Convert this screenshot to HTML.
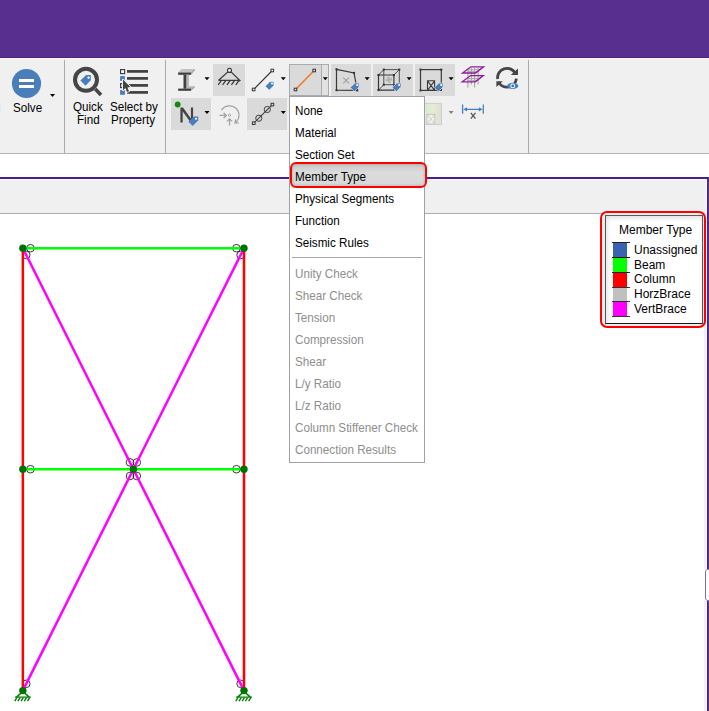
<!DOCTYPE html>
<html><head><meta charset="utf-8">
<style>
*{margin:0;padding:0;box-sizing:border-box}
html,body{width:709px;height:711px;overflow:hidden;background:#f0f0f0;font-family:"Liberation Sans",sans-serif;position:relative}
.a{position:absolute}
#hdr{left:0;top:0;width:709px;height:57px;background:#582e8f}
#hdrl{left:0;top:57px;width:709px;height:1px;background:#4e2387}
#hdrw{left:0;top:58px;width:709px;height:1px;background:#f6f6f6}
.sep{width:1px;background:#a9a9ae;top:60px;height:93px}
#tbb{left:0;top:153px;width:709px;height:1px;background:#b4b4bb}
#wstrip{left:0;top:154px;width:709px;height:23px;background:#fff}
#pl{left:0;top:177px;width:709px;height:2px;background:#48218a}
#plw{left:0;top:179px;width:707px;height:1px;background:#f8f8f8}
#gstrip{left:0;top:180px;width:707px;height:33px;background:#f0f0f0}
#gl{left:0;top:213px;width:701px;height:1px;background:#acacb2}
#canvas{left:0;top:214px;width:704px;height:497px;background:#fff}
#cg{left:704px;top:214px;width:2px;height:497px;background:#f0f0f0}
#cw{left:706px;top:180px;width:1px;height:531px;background:#fafafa}
#pr{left:707px;top:177px;width:1px;height:534px;background:#4a2388}
#pr2{left:708px;top:177px;width:1px;height:534px;background:#582e8f}
.t{font-size:12.4px;color:#000;white-space:nowrap;line-height:13px;transform:scaleX(0.94);transform-origin:0 0}
.btn{background:#dadada}
.arr{width:0;height:0;border-left:2.5px solid transparent;border-right:2.5px solid transparent;border-top:3px solid #000}
#menu{left:289px;top:96px;width:136px;height:367px;background:#fff;border:1px solid #a0a0a8}
.mi{left:295px;line-height:13px;font-size:12.4px;color:#000;white-space:nowrap;transform:scaleX(0.94);transform-origin:0 0}
.dis{color:#8e8e8e}
#mhl{left:289.5px;top:162.2px;width:137.3px;height:25.4px;border:2.5px solid #ff0000;border-radius:6px;background:linear-gradient(#c9c9c9,#dcdcdc 40%,#d8d8d8);box-shadow:inset 0 0 3px rgba(0,0,0,.25)}
.lg{font-size:12px;line-height:13px;color:#000;white-space:nowrap}
</style></head><body>
<div class="a" id="hdr"></div>
<div class="a" id="hdrl"></div>
<div class="a" id="hdrw"></div>
<div class="a sep" style="left:64px"></div>
<div class="a sep" style="left:165px"></div>
<div class="a sep" style="left:528px"></div>
<div class="a" id="tbb"></div>
<div class="a" id="wstrip"></div>
<div class="a" id="pl"></div>
<div class="a" id="plw"></div>
<div class="a" id="gstrip"></div>
<div class="a" id="gl"></div>
<div class="a" id="canvas"></div>
<div class="a" id="cg"></div>
<div class="a" id="cw"></div>
<div class="a" id="pr"></div>
<div class="a" id="pr2"></div>

<svg class="a" style="left:0;top:214px" width="704" height="497" viewBox="0 214 704 497">
<circle cx="30.45" cy="248.20" r="3.8" fill="none" stroke="#222" stroke-width="0.9"/>
<circle cx="236.40" cy="248.20" r="3.8" fill="none" stroke="#222" stroke-width="0.9"/>
<circle cx="30.45" cy="469.20" r="3.8" fill="none" stroke="#222" stroke-width="0.9"/>
<circle cx="236.40" cy="469.20" r="3.8" fill="none" stroke="#222" stroke-width="0.9"/>
<circle cx="26.25" cy="255.00" r="3.8" fill="none" stroke="#222" stroke-width="0.9"/>
<circle cx="130.00" cy="462.40" r="3.8" fill="none" stroke="#222" stroke-width="0.9"/>
<circle cx="240.60" cy="255.00" r="3.8" fill="none" stroke="#222" stroke-width="0.9"/>
<circle cx="136.80" cy="462.40" r="3.8" fill="none" stroke="#222" stroke-width="0.9"/>
<circle cx="130.00" cy="476.00" r="3.8" fill="none" stroke="#222" stroke-width="0.9"/>
<circle cx="26.25" cy="683.80" r="3.8" fill="none" stroke="#222" stroke-width="0.9"/>
<circle cx="136.80" cy="476.00" r="3.8" fill="none" stroke="#222" stroke-width="0.9"/>
<circle cx="240.60" cy="683.80" r="3.8" fill="none" stroke="#222" stroke-width="0.9"/>
<line x1="22.85" y1="248.2" x2="22.85" y2="690.6" stroke="#ff0000" stroke-width="2.5"/>
<line x1="244.0" y1="248.2" x2="244.0" y2="690.6" stroke="#ff0000" stroke-width="2.5"/>
<line x1="22.85" y1="248.2" x2="244.0" y2="248.2" stroke="#00ff00" stroke-width="2.5"/>
<line x1="22.85" y1="469.2" x2="244.0" y2="469.2" stroke="#00ff00" stroke-width="2.5"/>
<line x1="22.85" y1="248.2" x2="133.4" y2="469.2" stroke="#ff00ff" stroke-width="2.5"/>
<line x1="244.0" y1="248.2" x2="133.4" y2="469.2" stroke="#ff00ff" stroke-width="2.5"/>
<line x1="133.4" y1="469.2" x2="22.85" y2="690.6" stroke="#ff00ff" stroke-width="2.5"/>
<line x1="133.4" y1="469.2" x2="244.0" y2="690.6" stroke="#ff00ff" stroke-width="2.5"/>
<circle cx="22.85" cy="248.2" r="3.7" fill="#007000"/>
<circle cx="244.0" cy="248.2" r="3.7" fill="#007000"/>
<circle cx="22.85" cy="469.2" r="3.7" fill="#007000"/>
<circle cx="133.4" cy="469.2" r="3.7" fill="#007000"/>
<circle cx="244.0" cy="469.2" r="3.7" fill="#007000"/>
<circle cx="22.85" cy="690.6" r="3.7" fill="#007000"/>
<circle cx="244.0" cy="690.6" r="3.7" fill="#007000"/>
<path d="M22.85 691.6 L16.35 697.1 M22.85 691.6 L29.35 697.1 M14.850000000000001 697.1 L30.85 697.1" stroke="#008000" stroke-width="1.4" fill="none"/>
<path d="M16.9 697.6 L14.7 701.1 M20.1 697.6 L17.9 701.1 M23.2 697.6 L21.1 701.1 M26.5 697.6 L24.3 701.1 M29.7 697.6 L27.5 701.1 " stroke="#008000" stroke-width="1.4" fill="none"/>
<path d="M244.0 691.6 L237.5 697.1 M244.0 691.6 L250.5 697.1 M236.0 697.1 L252.0 697.1" stroke="#008000" stroke-width="1.4" fill="none"/>
<path d="M238.0 697.6 L235.8 701.1 M241.2 697.6 L239.0 701.1 M244.4 697.6 L242.2 701.1 M247.6 697.6 L245.4 701.1 M250.8 697.6 L248.6 701.1 " stroke="#008000" stroke-width="1.4" fill="none"/>
</svg>
<!-- legend -->
<div class="a" style="left:600px;top:211.3px;width:105.9px;height:116.9px;border:2.5px solid #ff0000;border-radius:7px;background:#ececec"></div>
<div class="a" style="left:605.4px;top:214.9px;width:97.3px;height:108.8px;border-style:solid;border-width:1.7px 1.9px 1.3px 1.5px;border-color:#5a5a5a #5a5a5a #1a1a1a #555;background:#fff;box-shadow:inset 1px 2px 5px rgba(0,0,0,.13)"></div>
<div class="a lg" style="left:619px;top:223.5px">Member Type</div>
<div class="a" style="left:613px;top:242px;width:14px;height:15px;background:#3a62b2"></div>
<div class="a" style="left:613px;top:257px;width:14px;height:15px;background:#00ff00"></div>
<div class="a" style="left:613px;top:272px;width:14px;height:15px;background:#ff0000"></div>
<div class="a" style="left:613px;top:287px;width:14px;height:14px;background:#c0c0c0"></div>
<div class="a" style="left:613px;top:301px;width:14px;height:15px;background:#ff00ff"></div>
<div class="a" style="left:612px;top:242px;width:18px;height:1px;background:#222"></div>
<div class="a" style="left:612px;top:257px;width:18px;height:1px;background:#111"></div>
<div class="a" style="left:612px;top:272px;width:18px;height:1px;background:#222"></div>
<div class="a" style="left:612px;top:287px;width:18px;height:1px;background:#333"></div>
<div class="a" style="left:612px;top:301px;width:18px;height:1px;background:#333"></div>
<div class="a" style="left:612px;top:316px;width:18px;height:1px;background:#333"></div>
<div class="a lg" style="left:634px;top:243.5px">Unassigned</div>
<div class="a lg" style="left:634px;top:258.5px">Beam</div>
<div class="a lg" style="left:634px;top:273.2px">Column</div>
<div class="a lg" style="left:634px;top:287.8px">HorzBrace</div>
<div class="a lg" style="left:634px;top:302.6px">VertBrace</div>

<svg class="a" style="left:700px;top:560px" width="9" height="50" viewBox="700 560 9 50"><rect x="704" y="569.5" width="5" height="31" fill="#fff"/><path d="M709 569.3 L707.2 569.3 L705.5 571.2 L705.5 598.8 L707.2 600.7 L709 600.7" fill="none" stroke="#8468bb" stroke-width="1"/></svg>
<div class="a" style="left:0;top:105px;width:1px;height:8px;background:#d8f0f0"></div>
<!-- Solve -->
<svg class="a" style="left:0;top:58px" width="709" height="95" viewBox="0 58 709 95">
<circle cx="26.5" cy="83.5" r="14.6" fill="#4a7ebb"/><rect x="19" y="79" width="15" height="3" fill="#fff"/><rect x="19" y="85" width="15" height="3" fill="#fff"/>
<path d="M50 94 L55 94 L52.5 97 Z" fill="#000"/>
<circle cx="86" cy="79.8" r="11" fill="none" stroke="#454545" stroke-width="4"/><path d="M95.3 89.1 L101 95" stroke="#454545" stroke-width="3.6"/>
<path d="M80.4 80.6 L85.5 85.7 L90.8 80.3 L90.8 75.1 L86.2 75.1 Z" fill="#4a7ebb"/><circle cx="88.6" cy="77.6" r="1.2" fill="#fff"/>
<rect x="127" y="70.05000000000001" width="21" height="2.7" fill="#404040"/>
<rect x="127" y="77.05000000000001" width="21" height="2.7" fill="#404040"/>
<rect x="127" y="84.05000000000001" width="21" height="2.7" fill="#404040"/>
<rect x="127" y="91.05000000000001" width="21" height="2.7" fill="#404040"/>
<rect x="120.6" y="69.6" width="4" height="4" fill="#fff" stroke="#404040" stroke-width="1.2"/>
<rect x="120.1" y="76.1" width="4.8" height="4.8" fill="#4a7ebb"/>
<rect x="120.6" y="83.6" width="4" height="4" fill="none" stroke="#404040" stroke-width="1.2"/>
<rect x="120.1" y="90" width="4.8" height="4.8" fill="#4a7ebb"/>
<path d="M123 79.6 L123 90.2 L125.4 88.1 L127 92 L129 91.2 L127.4 87.5 L130.3 87 Z" fill="#f4f4f4" stroke="#f4f4f4" stroke-width="1.8" stroke-linejoin="round"/><path d="M123 79.6 L123 90.2 L125.4 88.1 L127 92 L129 91.2 L127.4 87.5 L130.3 87 Z" fill="#444"/>
<rect x="213" y="64" width="32" height="32" fill="#dadada"/>
<rect x="171" y="98" width="40" height="32" fill="#dadada"/>
<rect x="247" y="98" width="40" height="32" fill="#dadada"/>
<rect x="331" y="64" width="40" height="32" fill="#dadada"/>
<rect x="373" y="64" width="40" height="32" fill="#dadada"/>
<rect x="415" y="64" width="40" height="32" fill="#dadada"/>
<rect x="289.5" y="64.5" width="39" height="31" fill="#dadada" stroke="#a9a9b0" stroke-width="1"/>
<rect x="322" y="65" width="6" height="30" fill="#e2e2e2"/><line x1="321.5" y1="65" x2="321.5" y2="95" stroke="#a9a9b0" stroke-width="1"/>
<path d="M178.2 72.6 L181.3 69.1 L194.8 69.1 L191 72.6 Z" fill="#c4c4c4"/><path d="M191 72.6 L194.8 69.1 L194.8 70.6 L191 74.7 Z" fill="#a0a0a0"/><rect x="178.1" y="72.5" width="12.9" height="2.3" fill="#404040"/><path d="M186.2 74.7 L189 74.7 L189 86.2 L194.8 86.2 L191 88.8 L186.2 88.8 Z" fill="#b8b8b8"/><path d="M191 88.6 L194.8 86.1 L194.8 87.6 L191 90.8 Z" fill="#a8a8a8"/><rect x="183.5" y="74.7" width="2.8" height="14" fill="#404040"/><rect x="178.1" y="88.6" width="12.9" height="2.2" fill="#404040"/>
<path d="M204.5 77.3 L209.5 77.3 L207.0 80.3 Z" fill="#000"/>
<path d="M228.2 71.6 L218.6 80.3 M230.8 71.6 L239.9 80.6 L238.9 81 M218.4 80.3 L239 80.3" stroke="#3a3a3a" stroke-width="1.25" fill="none"/><circle cx="229.5" cy="70.4" r="2" fill="#f4f4f4" stroke="#3a3a3a" stroke-width="1.1"/><path d="M221.3 80.6 L218.2 84.8 M225.7 80.6 L222.6 84.8 M230.1 80.6 L227.0 84.8 M234.5 80.6 L231.4 84.8 M238.9 80.6 L235.8 84.8" stroke="#3a3a3a" stroke-width="1.25"/>
<line x1="253.6" y1="89.5" x2="272.3" y2="70.5" stroke="#383838" stroke-width="1.1"/><rect x="252.3" y="88.2" width="2.6" height="2.6" fill="#f0f0f0" stroke="#383838" stroke-width="1"/><rect x="271.0" y="69.2" width="2.6" height="2.6" fill="#f0f0f0" stroke="#383838" stroke-width="1"/>
<path d="M265.2 86.2 L269.2 90.2 L273.9 85.6 L273.9 81.6 L269.9 81.6 Z" fill="#4a7ebb" stroke="#f0f0f0" stroke-width="0.7"/><circle cx="272.0" cy="83.5" r="1" fill="#fff"/>
<path d="M280.8 77.3 L285.8 77.3 L283.3 80.3 Z" fill="#000"/>
<line x1="295.5" y1="89.5" x2="314.2" y2="70.5" stroke="#f07820" stroke-width="1.5"/><rect x="294.2" y="88.2" width="2.6" height="2.6" fill="#dadada" stroke="#383838" stroke-width="1"/><rect x="312.9" y="69.2" width="2.6" height="2.6" fill="#dadada" stroke="#383838" stroke-width="1"/>
<path d="M322.8 77.3 L327.8 77.3 L325.3 80.3 Z" fill="#000"/>
<path d="M336.5 69.3 L354 72.9 L357.3 90.4 L336.5 90.2 Z" fill="none" stroke="#3a3a3a" stroke-width="1.2"/><rect x="335.5" y="68.3" width="2" height="2" fill="#303030"/><rect x="353.0" y="71.9" width="2" height="2" fill="#303030"/><rect x="335.5" y="89.2" width="2" height="2" fill="#303030"/><rect x="356.3" y="89.4" width="2" height="2" fill="#303030"/>
<path d="M343.2 77.6 L349 83.4 M349 77.6 L343.2 83.4" stroke="#a0a0a0" stroke-width="1.1"/>
<path d="M350.3 87.6 L354.3 91.6 L359.0 87.0 L359.0 83.0 L355.0 83.0 Z" fill="#4a7ebb" stroke="#dadada" stroke-width="0.7"/><circle cx="357.1" cy="84.9" r="1" fill="#fff"/>
<path d="M364.6 77.3 L369.6 77.3 L367.1 80.3 Z" fill="#000"/>
<path d="M383.8 69.6 L399.3 69.6 L399.3 84.7 L383.8 84.7 Z M378.5 75 L383.8 69.6 M393.9 75 L399.3 69.6 M393.9 90.1 L399.3 84.7 M378.5 90.1 L383.8 84.7" fill="none" stroke="#505050" stroke-width="1"/>
<path d="M378.5 75 L393.9 75 L393.9 90.1 L378.5 90.1 Z" fill="none" stroke="#383838" stroke-width="1.2"/><rect x="377.5" y="74.0" width="2" height="2" fill="#303030"/><rect x="392.9" y="74.0" width="2" height="2" fill="#303030"/><rect x="377.5" y="89.1" width="2" height="2" fill="#303030"/><rect x="382.8" y="68.6" width="2" height="2" fill="#303030"/><rect x="398.3" y="68.6" width="2" height="2" fill="#303030"/><rect x="382.8" y="83.7" width="2" height="2" fill="#303030"/>
<path d="M388.8 79.7 L387.2 76.9 L389.6 77.2 Z M388.8 79.7 L391.6 78.1 L391.3 80.5 Z M388.8 79.7 L390.4 82.5 L388 82.2 Z M388.8 79.7 L386 81.3 L386.3 78.9 Z" fill="#a8a8a8" stroke="#b4b4b4" stroke-width="0.8"/>
<path d="M392.3 87.6 L396.3 91.6 L401.0 87.0 L401.0 83.0 L397.0 83.0 Z" fill="#4a7ebb" stroke="#dadada" stroke-width="0.7"/><circle cx="399.1" cy="84.9" r="1" fill="#fff"/>
<path d="M406.6 77.3 L411.6 77.3 L409.1 80.3 Z" fill="#000"/>
<rect x="420.5" y="69.6" width="20.8" height="20.8" fill="none" stroke="#3a3a3a" stroke-width="1.2"/><rect x="419.5" y="68.6" width="2" height="2" fill="#303030"/><rect x="440.3" y="68.6" width="2" height="2" fill="#303030"/><rect x="419.5" y="89.4" width="2" height="2" fill="#303030"/>
<path d="M427.5 80.8 L434.6 80.8 L434.6 90.3 L427.5 90.3 Z M427.5 80.8 L434.6 90.3 M434.6 80.8 L427.5 90.3" fill="none" stroke="#3a3a3a" stroke-width="1.1"/>
<path d="M434.3 87.6 L438.3 91.6 L443.0 87.0 L443.0 83.0 L439.0 83.0 Z" fill="#4a7ebb" stroke="#dadada" stroke-width="0.7"/><circle cx="441.1" cy="84.9" r="1" fill="#fff"/>
<path d="M448.6 77.3 L453.6 77.3 L451.1 80.3 Z" fill="#000"/>
<path d="M467.9 69 L467.9 87.6 M471.3 68 L471.3 84.4 M474.6 68 L474.6 87.6 M478.1 68 L478.1 84.4" stroke="#a4a4a4" stroke-width="1.1"/>
<path d="M468 69.8 L480.5 69.8 M467 71.6 L478.5 71.6 M468 78.6 L480.5 78.6 M467 80.4 L478.5 80.4" stroke="#a8a8a8" stroke-width="1"/>
<path d="M462.6 73 L470.8 66.8 L483.6 66.8 L475.5 73 Z M462.3 81.8 L470.6 75.6 L483.3 75.6 L475.3 81.8 Z" fill="none" stroke="#8e1c9e" stroke-width="1.3" stroke-linejoin="miter"/>
<path d="M497.69 79.01 A9.4 9.4 0 0 1 515.14 73.00" fill="none" stroke="#454545" stroke-width="2.8"/><path d="M510.8 75 L518 75 L518 68.6 Z" fill="#454545"/><path d="M516.36 78.52 A9.4 9.4 0 0 1 498.70 82.11" fill="none" stroke="#454545" stroke-width="2.8"/><path d="M496.4 81.2 L502.8 81.2 L496.4 87 Z" fill="#454545"/><ellipse cx="512.7" cy="85.9" rx="5.6" ry="3.1" fill="#4a7ebb"/><circle cx="512.7" cy="85.9" r="2.4" fill="#fff"/><circle cx="512.7" cy="85.9" r="1.4" fill="#3a6fb0"/>
<circle cx="177.7" cy="104.5" r="2.9" fill="#0c8a0c"/><path d="M180.4 122.6 V107.5 H183 L190.9 118.6 V107.5 H193.1 V122.6 H190.7 L182.7 111.4 V122.6 Z" fill="#454545"/><path d="M188.4 121.8 L192.7 126.1 L198.2 120.6 L198.2 116.5 L193.9 116.5 Z" fill="#4a7ebb"/><circle cx="196" cy="118.7" r="1.05" fill="#fff"/>
<path d="M204.5 111 L209.5 111 L207.0 114 Z" fill="#000"/>
<path d="M221.44 110.27 A9.5 9.5 0 1 1 235.86 122.36" fill="none" stroke="#a4a4a4" stroke-width="1.2"/>
<path d="M238.71 122.90 L235.11 123.03 L235.61 119.46" fill="none" stroke="#a4a4a4" stroke-width="1.4"/>
<path d="M219.4 115.4 L226.2 115.4 M223.6 112.8 L226.3 115.4 L223.6 118" fill="none" stroke="#a4a4a4" stroke-width="1.3"/>
<path d="M229.5 125.6 L229.5 118.8 M226.9 121.4 L229.5 118.8 L232.1 121.4" fill="none" stroke="#a4a4a4" stroke-width="1.3"/>
<circle cx="229.5" cy="115.2" r="1.1" fill="none" stroke="#a4a4a4" stroke-width="0.9"/>
<line x1="253.7" y1="123.2" x2="272.4" y2="104.6" stroke="#383838" stroke-width="1.1"/><rect x="252.4" y="121.9" width="2.6" height="2.6" fill="#dadada" stroke="#383838" stroke-width="1"/><rect x="271.1" y="103.3" width="2.6" height="2.6" fill="#dadada" stroke="#383838" stroke-width="1"/>
<circle cx="258.8" cy="118.2" r="3.1" fill="none" stroke="#404040" stroke-width="1"/><circle cx="267.3" cy="109.5" r="3.1" fill="none" stroke="#404040" stroke-width="1"/>
<path d="M280.8 111 L285.8 111 L283.3 114 Z" fill="#000"/>
<defs><linearGradient id="fw" x1="0" y1="0" x2="1" y2="0"><stop offset="0" stop-color="#d4ecd0"/><stop offset="0.55" stop-color="#e6ecd2"/><stop offset="1" stop-color="#e2dcd6"/></linearGradient></defs>
<rect x="423.5" y="103.4" width="18" height="21" fill="url(#fw)" stroke="#cfcfcf" stroke-width="1"/>
<rect x="427" y="114.4" width="7.8" height="9.6" fill="#f2f2f2" stroke="#c4c4c4" stroke-width="1"/><path d="M427 114.4 L434.8 124 M434.8 114.4 L427 124" fill="none" stroke="#c8c8c8" stroke-width="0.9"/>
<path d="M448.6 111 L453.6 111 L451.1 114 Z" fill="#808080"/>
<path d="M462.6 104.6 L462.6 113.8 M483.3 104.6 L483.3 113.8 M465 109.3 L481 109.3" stroke="#4a7ebb" stroke-width="1.3" fill="none"/>
<path d="M463.4 109.3 L467 107.2 L467 111.4 Z M482.5 109.3 L478.9 107.2 L478.9 111.4 Z" fill="#4a7ebb"/>
<path d="M470.8 112.8 L475.5 118.6 M475.5 112.8 L470.8 118.6" stroke="#555" stroke-width="1.3"/>
</svg>
<div class="a t" style="left:13px;top:102px">Solve</div>
<div class="a t" style="left:73px;top:101px">Quick</div>
<div class="a t" style="left:77px;top:114px">Find</div>
<div class="a t" style="left:110px;top:101px">Select by</div>
<div class="a t" style="left:111px;top:114px">Property</div>

<!-- menu -->
<div class="a" id="menu"></div>
<div class="a" id="mhl"></div>
<div class="a" style="left:292px;top:257px;width:130px;height:1px;background:#a8a8a8"></div>
<div class="a mi" style="top:105px">None</div>
<div class="a mi" style="top:127px">Material</div>
<div class="a mi" style="top:149px">Section Set</div>
<div class="a mi" style="top:171px">Member Type</div>
<div class="a mi" style="top:193px">Physical Segments</div>
<div class="a mi" style="top:215px">Function</div>
<div class="a mi" style="top:237px">Seismic Rules</div>
<div class="a mi dis" style="top:268px">Unity Check</div>
<div class="a mi dis" style="top:290px">Shear Check</div>
<div class="a mi dis" style="top:312px">Tension</div>
<div class="a mi dis" style="top:334px">Compression</div>
<div class="a mi dis" style="top:356px">Shear</div>
<div class="a mi dis" style="top:378px">L/y Ratio</div>
<div class="a mi dis" style="top:400px">L/z Ratio</div>
<div class="a mi dis" style="top:422px">Column Stiffener Check</div>
<div class="a mi dis" style="top:444px">Connection Results</div>

</body></html>
